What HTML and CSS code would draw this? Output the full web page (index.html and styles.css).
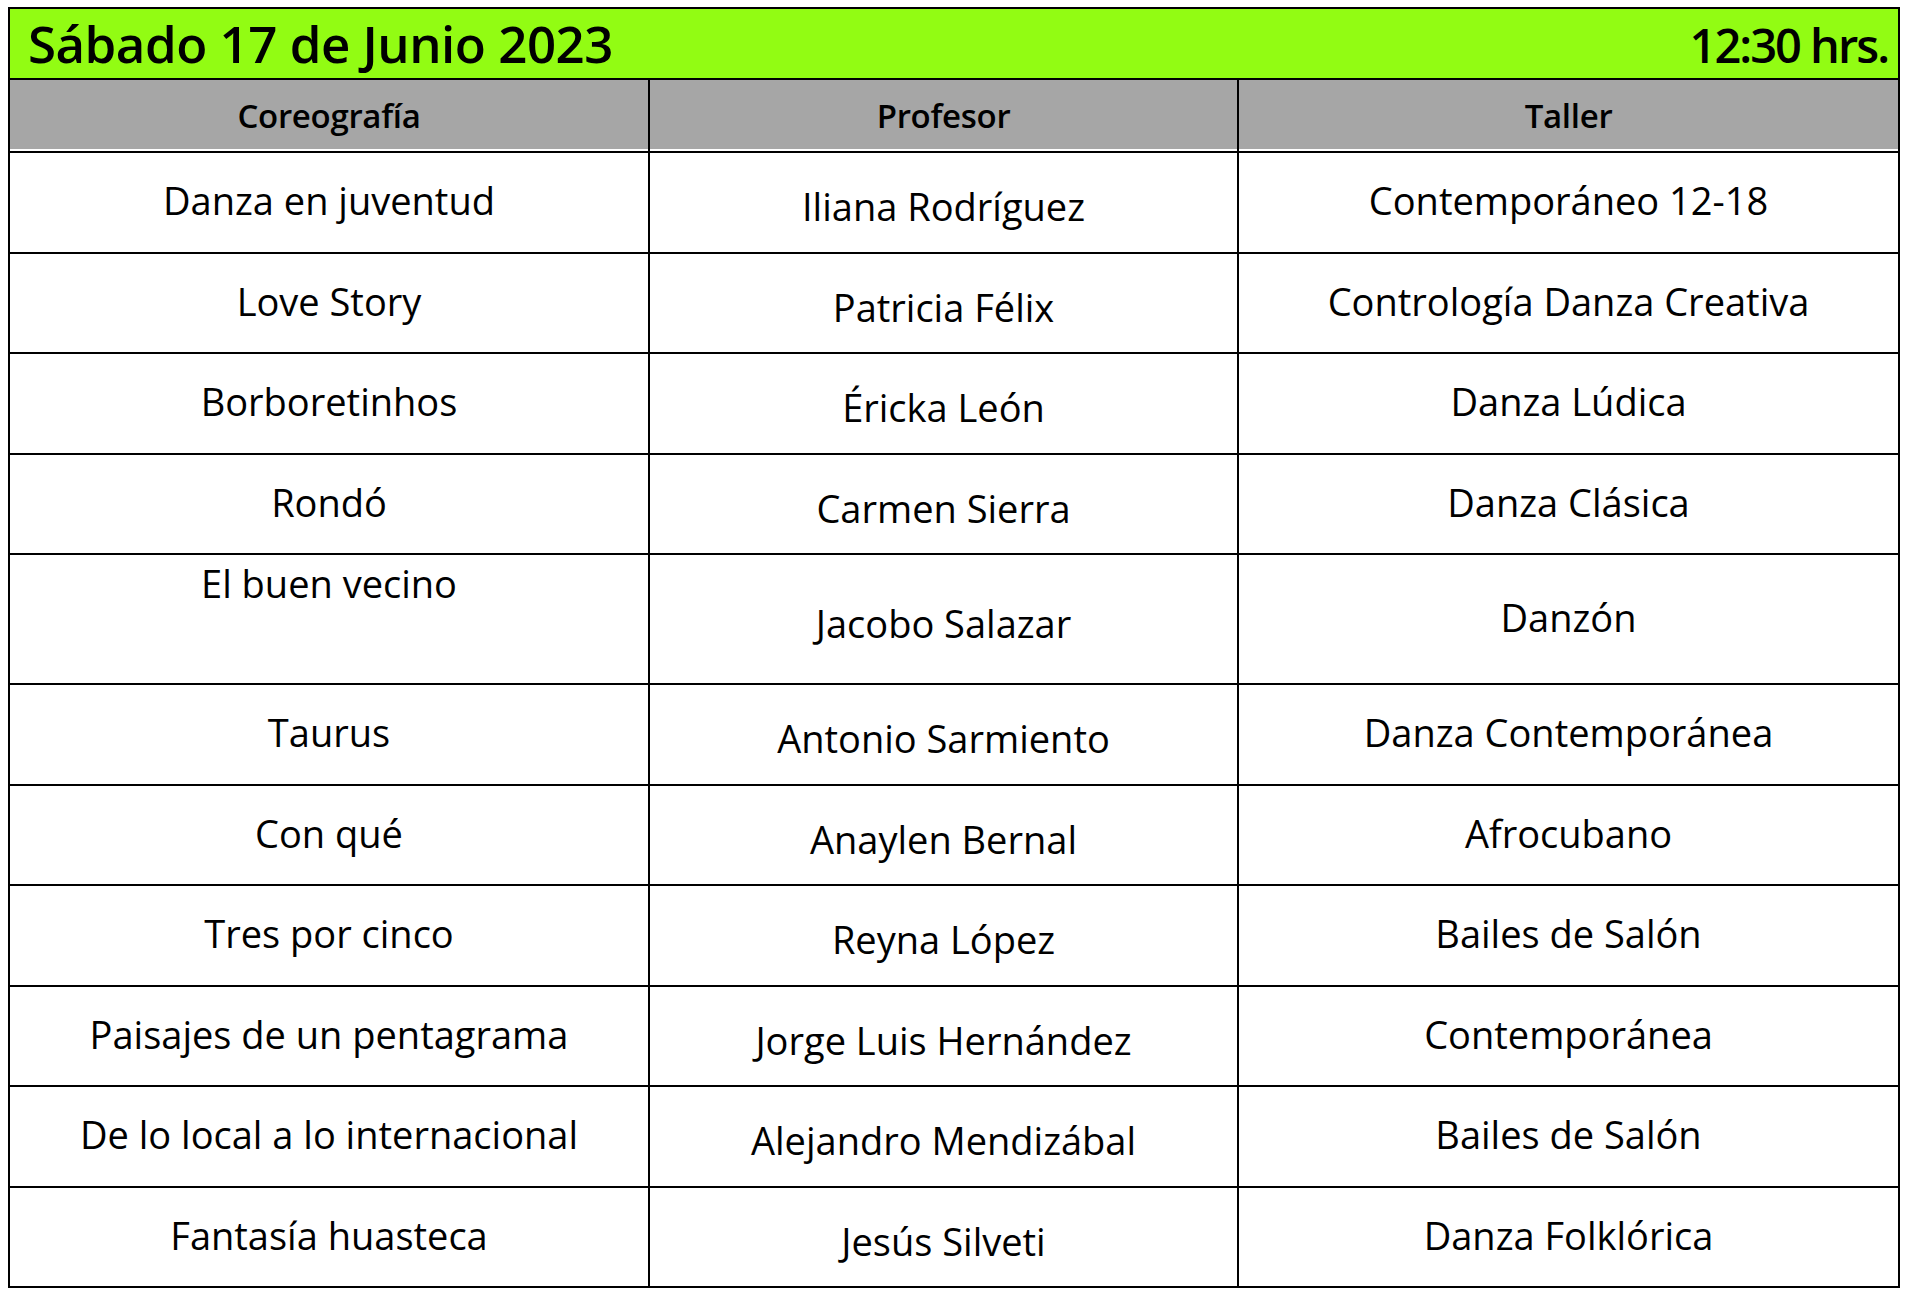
FILE: index.html
```html
<!DOCTYPE html>
<html lang="es">
<head>
<meta charset="utf-8">
<title>Programa</title>
<link rel="stylesheet" href="styles.css">
</head>
<body>
<table class="sched">
  <colgroup>
    <col class="c1"><col class="c2"><col class="c3">
  </colgroup>
  <thead>
    <tr class="title-row">
      <th colspan="3"><div class="title"><span class="date">Sábado 17 de Junio 2023</span><span class="time">12:30 hrs.</span></div></th>
    </tr>
    <tr class="head-row">
      <th>Coreografía</th><th>Profesor</th><th>Taller</th>
    </tr>
  </thead>
  <tbody>
    <tr><td>Danza en juventud</td><td class="p">Iliana Rodríguez</td><td>Contemporáneo 12-18</td></tr>
    <tr><td>Love Story</td><td class="p">Patricia Félix</td><td>Contrología Danza Creativa</td></tr>
    <tr><td>Borboretinhos</td><td class="p">Éricka León</td><td>Danza Lúdica</td></tr>
    <tr><td>Rondó</td><td class="p">Carmen Sierra</td><td>Danza Clásica</td></tr>
    <tr class="tall"><td class="top">El buen vecino</td><td class="p">Jacobo Salazar</td><td>Danzón</td></tr>
    <tr><td>Taurus</td><td class="p">Antonio Sarmiento</td><td>Danza Contemporánea</td></tr>
    <tr><td>Con qué</td><td class="p">Anaylen Bernal</td><td>Afrocubano</td></tr>
    <tr><td>Tres por cinco</td><td class="p">Reyna López</td><td>Bailes de Salón</td></tr>
    <tr><td>Paisajes de un pentagrama</td><td class="p">Jorge Luis Hernández</td><td>Contemporánea</td></tr>
    <tr><td>De lo local a lo internacional</td><td class="p">Alejandro Mendizábal</td><td>Bailes de Salón</td></tr>
    <tr><td>Fantasía huasteca</td><td class="p">Jesús Silveti</td><td>Danza Folklórica</td></tr>
  </tbody>
</table>
</body>
</html>
```
FILE: styles.css
```css
html, body {
  margin: 0;
  background: #fff;
}
body {
  padding: 7px 0 0 8px;
  font-family: "Open Sans", "Noto Sans", "Liberation Sans", sans-serif;
  color: #000;
}
.sched {
  border-collapse: collapse;
  table-layout: fixed;
  width: 1890px;
  border: 2px solid #000;
}
.c1 { width: 640px; }
.c2 { width: 589px; }
.c3 { width: 661px; }

.title-row {
  height: 71px;
}
.title-row th {
  padding: 0;
  background: #92fc13;
  border: 2px solid #000;
}
.title {
  display: flex;
  justify-content: space-between;
  align-items: baseline;
  padding: 0 10px 0 18px;
  font-weight: 600;
  line-height: 64px;
}
.date {
  font-size: 51px;
  letter-spacing: -0.5px;
}
.time {
  font-size: 47px;
  letter-spacing: -2px;
}
.head-row {
  height: 73px;
}
.head-row th {
  padding: 0;
  background: #a6a6a6;
  border: 2px solid #000;
  box-shadow: inset 0 -2px 0 #fff;
  font-size: 33px;
  font-weight: 600;
  letter-spacing: -0.3px;
  text-align: center;
}
tbody tr {
  height: 100.5px;
}
tbody tr.tall {
  height: 130px;
}
td {
  padding: 0 0 4px;
  border: 2px solid #000;
  text-align: center;
  vertical-align: middle;
  font-size: 38px;
  font-weight: 400;
}
td.p {
  padding: 8px 0 0;
}
.tall td.top {
  vertical-align: top;
  padding-top: 2px;
}
```
